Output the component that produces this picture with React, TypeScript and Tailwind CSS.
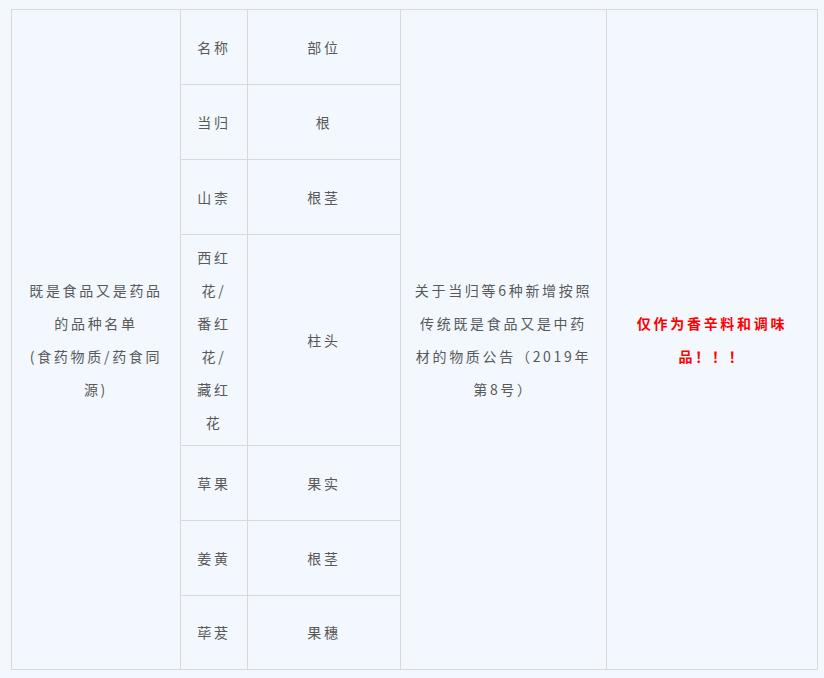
import React from "react";

const font = { fontFamily: '"Noto Sans CJK SC", "Noto Sans", sans-serif' };

function Lines({ lines, className = "" }: { lines: string[]; className?: string }) {
  return (
    <div className={className}>
      {lines.map((l, i) => (
        <div key={i} className="whitespace-nowrap">
          {l}
        </div>
      ))}
    </div>
  );
}

const cell = "border border-[#d9d9d9] text-center align-middle p-0";

export default function App() {
  const rows: { name: string[]; part: string; h: string }[] = [
    { name: ["名称"], part: "部位", h: "h-[75px]" },
    { name: ["当归"], part: "根", h: "h-[75px]" },
    { name: ["山柰"], part: "根茎", h: "h-[75px]" },
    { name: ["西红", "花/", "番红", "花/", "藏红", "花"], part: "柱头", h: "h-[211px]" },
    { name: ["草果"], part: "果实", h: "h-[75px]" },
    { name: ["姜黄"], part: "根茎", h: "h-[75px]" },
    { name: ["荜茇"], part: "果穗", h: "h-[74px]" },
  ];
  return (
    <div
      className="w-[824px] h-[678px] bg-[#f2f8fe] pt-[9px] pl-[11px] text-[14px] leading-[33px] tracking-[2.7px] text-[#595959]"
      style={font}
    >
      <table className="table-fixed border-collapse w-[806px]">
        <colgroup>
          <col className="w-[169px]" />
          <col className="w-[67px]" />
          <col className="w-[153px]" />
          <col className="w-[206px]" />
          <col className="w-[211px]" />
        </colgroup>
        <tbody>
          {rows.map((r, i) => (
            <tr key={i} className={r.h}>
              {i === 0 && (
                <td rowSpan={7} className={cell}>
                  <Lines
                    lines={["既是食品又是药品", "的品种名单", "(食药物质/药食同", "源)"]}
                  />
                </td>
              )}
              <td className={cell}>
                <Lines lines={r.name} />
              </td>
              <td className={cell}>{r.part}</td>
              {i === 0 && (
                <td rowSpan={7} className={cell}>
                  <Lines
                    lines={[
                      "关于当归等6种新增按照",
                      "传统既是食品又是中药",
                      "材的物质公告（2019年",
                      "第8号）",
                    ]}
                  />
                </td>
              )}
              {i === 0 && (
                <td rowSpan={7} className={cell}>
                  <Lines
                    className="text-[#ff0000] font-semibold"
                    lines={["仅作为香辛料和调味", "品！！！"]}
                  />
                </td>
              )}
            </tr>
          ))}
        </tbody>
      </table>
    </div>
  );
}
